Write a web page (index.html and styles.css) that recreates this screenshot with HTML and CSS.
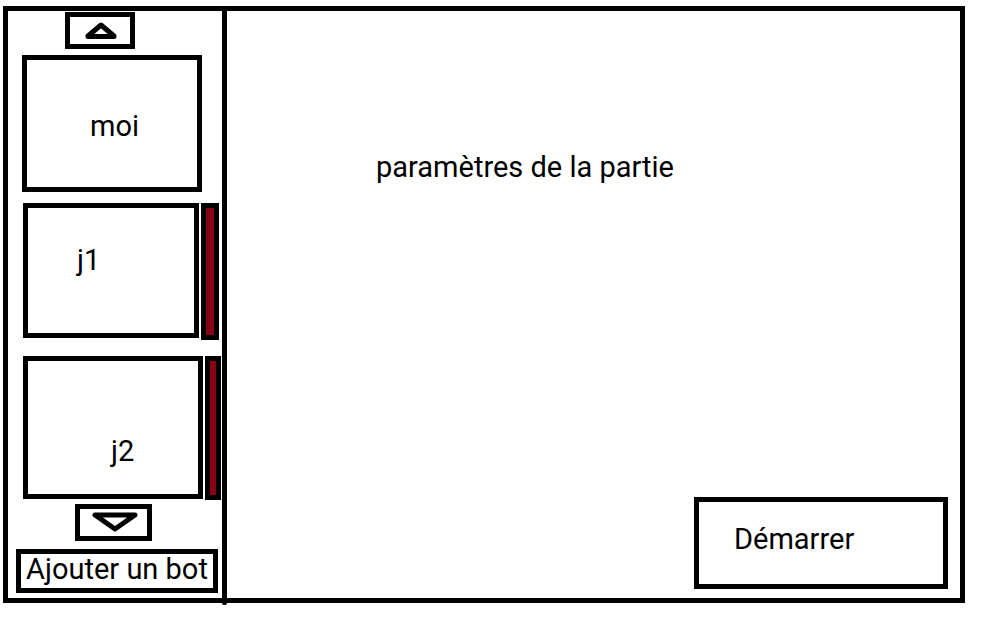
FILE: index.html
```html
<!DOCTYPE html>
<html lang="fr">
<head>
  <meta charset="utf-8">
  <meta name="viewport" content="width=device-width, initial-scale=1">
  <title>Paramètres de la partie</title>
  <link rel="stylesheet" href="styles.css">
</head>
<body>
  <div class="frame">
    <aside class="sidebar">
      <button class="box scroll scroll-up" type="button" aria-label="Monter">
        <svg class="arrow" width="34" height="20" viewBox="0 0 34 20" aria-hidden="true">
          <path d="M18 4 L31 15 V15.5 H5 V15 Z"/>
        </svg>
      </button>
      <div class="players">
        <section class="box player player-me">moi</section>
        <div class="row row-first">
          <section class="box player player-one">j1</section>
          <button class="box remove remove-one" type="button" aria-label="Retirer j1"></button>
        </div>
        <div class="row row-second">
          <section class="box player player-two">j2</section>
          <button class="box remove remove-two" type="button" aria-label="Retirer j2"></button>
        </div>
      </div>
      <button class="box scroll scroll-down" type="button" aria-label="Descendre">
        <svg class="arrow" width="50" height="22" viewBox="0 0 50 22" aria-hidden="true">
          <path d="M6 3 H46 L26 17 Z"/>
        </svg>
      </button>
      <button class="box add" type="button">Ajouter un bot</button>
    </aside>
    <main class="settings">
      <h1 class="title">paramètres de la partie</h1>
      <button class="box start" type="button">Démarrer</button>
    </main>
  </div>
</body>
</html>
```
FILE: styles.css
```css
* {
  box-sizing: border-box;
}

body {
  margin: 0;
  padding: 6px 35px 15px 3px;
  min-height: 100vh;
  display: flex;
  background: #fff;
  color: #000;
  font: 29px/30px Roboto, "Open Sans", sans-serif;
}

.frame {
  flex: 1;
  display: flex;
  border: 5px solid #000;
}

.box {
  margin: 0;
  padding: 0;
  border: 5px solid #000;
  border-radius: 0;
  background: #fff;
  color: inherit;
  font: inherit;
}

.sidebar {
  position: relative;
  flex: none;
  width: 219px;
  padding: 1px 1px 5px 8px;
  display: flex;
  flex-direction: column;
  align-items: flex-start;
  border-right: 5px solid #000;
}

/* Rounded end of the divider, over the frame's lower edge */
.sidebar::after {
  content: "";
  position: absolute;
  right: -5px;
  bottom: -7px;
  width: 5px;
  height: 7px;
  border-radius: 0 0 2px 2px;
  background: #000;
}

.scroll {
  height: 37px;
  display: flex;
  align-items: center;
  justify-content: center;
}

.scroll-up {
  width: 70px;
  margin-left: 49px;
}

.scroll-down {
  width: 77px;
  margin: 4px 0 8px 59px;
}

.arrow {
  display: block;
  fill: none;
  stroke: #000;
  stroke-width: 5;
  stroke-linejoin: round;
}

.players {
  flex: 1;
  padding: 6px 0 0 6px;
}

.player-me {
  width: 180px;
  height: 137px;
  padding: 51px 0 0 63px;
}

.row {
  display: flex;
  align-items: flex-start;
  gap: 2px;
  padding-left: 1px;
}

.row-first {
  margin-top: 11px;
}

.row-second {
  margin-top: 16px;
}

.player-one {
  width: 176px;
  height: 135px;
  padding: 37px 0 0 49px;
}

.player-two {
  width: 180px;
  height: 143px;
  padding: 75px 0 0 83px;
}

.remove {
  background: #880015;
}

.remove-one {
  width: 18px;
  height: 137px;
}

.remove-two {
  width: 16px;
  height: 144px;
}

.add {
  width: 202px;
  height: 44px;
  padding-bottom: 4px;
  white-space: nowrap;
}

.settings {
  flex: 1;
  display: flex;
  flex-direction: column;
  justify-content: space-between;
  padding: 141px 12px 9px 149px;
}

.title {
  margin: 0;
  font-size: inherit;
  font-weight: 400;
}

.start {
  align-self: flex-end;
  width: 254px;
  height: 92px;
  padding: 22px 0 30px 35px;
  text-align: left;
}
```
